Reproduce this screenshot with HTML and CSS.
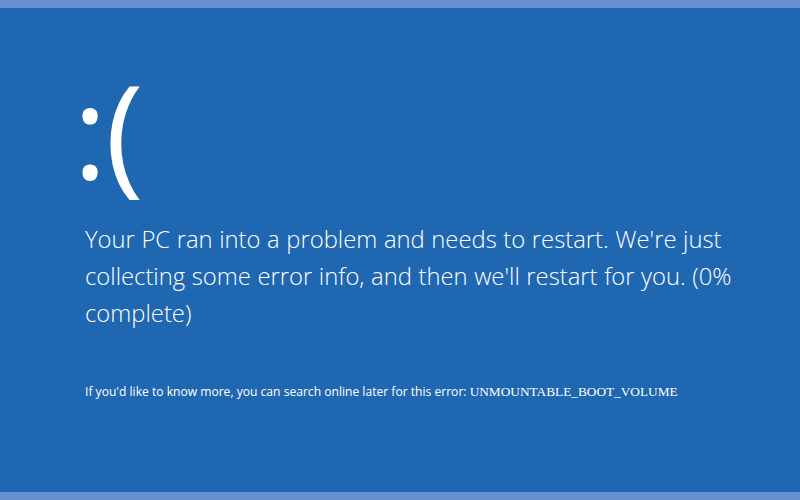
FILE: index.html
```html
<!DOCTYPE html>
<html>
	<head>
		<title>Restart</title>
		<link rel="stylesheet" href="styles.css">
	</head>
	<body>
		<div class="screen">
			<div class="face">:(</div>
			<p class="message">Your PC ran into a problem and needs to restart. We're just collecting some error info, and then we'll restart for you. (0% complete)</p>
			<p class="more">If you'd like to know more, you can search online later for this error: <span class="code">UNMOUNTABLE_BOOT_VOLUME</span></p>
		</div>
	</body>
</html>
```

FILE: styles.css
```css
html, body {
	height: 100%;
}

body {
	margin: 0;
	background: #6690cf;
	color: #ffffff;
	font-family: 'Open Sans', 'Noto Sans', sans-serif;
	padding: 8px 0;
	box-sizing: border-box;
}

.screen {
	background: #1f67b1;
	height: 100%;
	padding: 46px 0 0 85px;
	box-sizing: border-box;
}

.face {
	margin-left: -12px;
	font-size: 130px;
	line-height: 150px;
	font-weight: 400;
	letter-spacing: -2px;
}

.message {
	margin: 17px 0 0 0;
	width: 680px;
	font-size: 23.8px;
	line-height: 37px;
	font-weight: 300;
	word-spacing: 0.4px;
}

.more {
	margin: 51px 0 0 0;
	font-size: 12.1px;
}

.code {
	font-family: 'Liberation Serif', serif;
	font-size: 13.3px;
}
```
